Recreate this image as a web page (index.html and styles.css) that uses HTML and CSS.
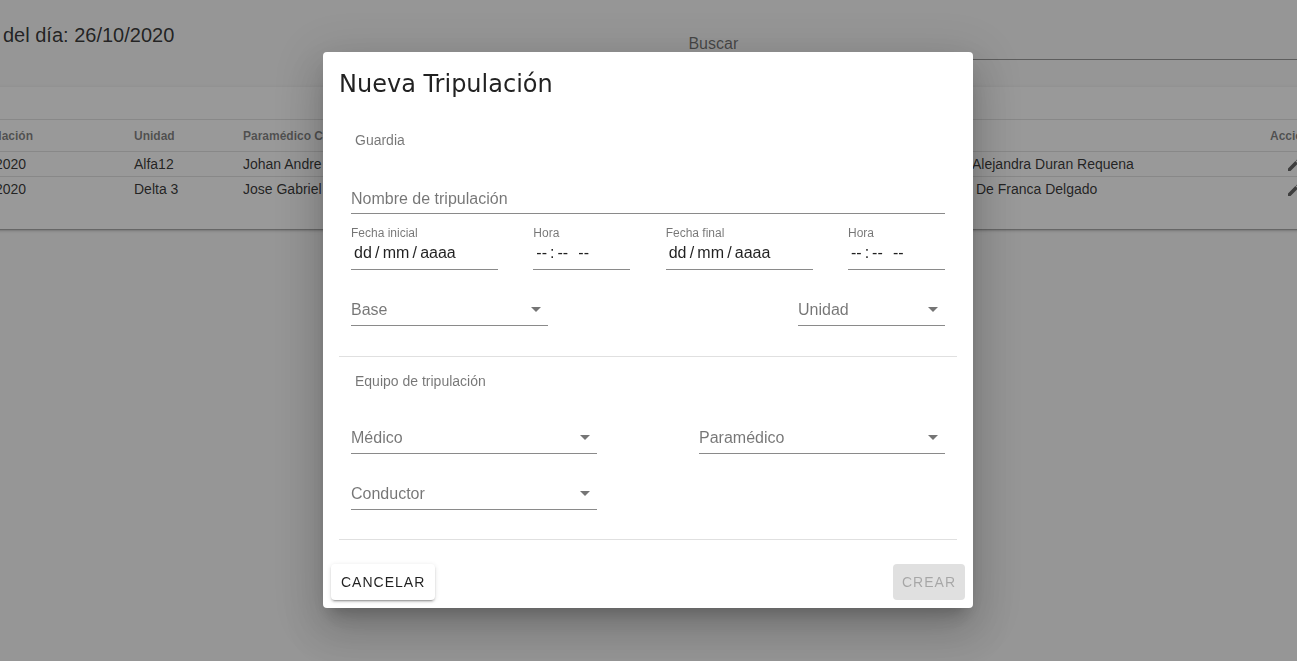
FILE: index.html
```html
<!DOCTYPE html>
<html lang="es">
<head>
<meta charset="utf-8">
<title>Nueva Tripulación</title>
<meta name="viewport" content="width=device-width, initial-scale=1">
<link rel="stylesheet" href="styles.css">
</head>
<body>
<svg class="sprite" aria-hidden="true">
  <symbol id="caret" viewBox="0 0 24 24"><path d="M7,10L12,15L17,10H7Z"/></symbol>
  <symbol id="pencil" viewBox="0 0 24 24"><path d="M20.71,7.04C21.1,6.65 21.1,6 20.71,5.63L18.37,3.29C18,2.9 17.35,2.9 16.96,3.29L15.12,5.12L18.87,8.87M3,17.25V21H6.75L17.81,9.93L14.06,6.18L3,17.25Z"/></symbol>
</svg>

<main class="page">
  <header class="topbar">
    <h1 class="topbar-title">del día: 26/10/2020</h1>
    <input class="search" type="search" placeholder="Buscar" aria-label="Buscar">
  </header>
  <section class="card">
    <table class="crews">
      <colgroup>
        <col class="col-name"><col class="col-unit"><col class="col-medic"><col class="col-driver"><col class="col-actions">
      </colgroup>
      <thead>
        <tr><th>ulación</th><th>Unidad</th><th>Paramédico C</th><th></th><th>Acciones</th></tr>
      </thead>
      <tbody>
        <tr>
          <td>/2020</td><td>Alfa12</td><td>Johan Andre</td><td>Alejandra Duran Requena</td>
          <td><button class="edit" type="button" aria-label="Editar"><svg><use href="#pencil"/></svg></button></td>
        </tr>
        <tr>
          <td>/2020</td><td>Delta 3</td><td>Jose Gabriel</td><td>&nbsp;De Franca Delgado</td>
          <td><button class="edit" type="button" aria-label="Editar"><svg><use href="#pencil"/></svg></button></td>
        </tr>
      </tbody>
    </table>
  </section>
</main>

<div class="overlay">
  <form class="dialog" role="dialog" aria-labelledby="dialog-title">
    <h2 class="dialog-title" id="dialog-title">Nueva Tripulación</h2>

    <section class="group group-shift">
      <h3 class="group-title">Guardia</h3>
      <div class="row">
        <input class="line name" type="text" placeholder="Nombre de tripulación" aria-label="Nombre de tripulación">
      </div>
      <div class="row row-dates">
        <div class="field date">
          <label for="start-date">Fecha inicial</label>
          <input class="line" id="start-date" type="text" value="dd&#8201;/&#8201;mm&#8201;/&#8201;aaaa">
        </div>
        <div class="field time">
          <label for="start-time">Hora</label>
          <input class="line" id="start-time" type="time">
        </div>
        <div class="field date">
          <label for="end-date">Fecha final</label>
          <input class="line" id="end-date" type="text" value="dd&#8201;/&#8201;mm&#8201;/&#8201;aaaa">
        </div>
        <div class="field time">
          <label for="end-time">Hora</label>
          <input class="line" id="end-time" type="time">
        </div>
      </div>
      <div class="row">
        <div class="pick base">
          <select class="line" aria-label="Base"><option>Base</option></select>
          <svg class="caret" aria-hidden="true"><use href="#caret"/></svg>
        </div>
        <div class="pick unit">
          <select class="line" aria-label="Unidad"><option>Unidad</option></select>
          <svg class="caret" aria-hidden="true"><use href="#caret"/></svg>
        </div>
      </div>
    </section>

    <section class="group group-team">
      <h3 class="group-title">Equipo de tripulación</h3>
      <div class="row">
        <div class="pick member">
          <select class="line" aria-label="Médico"><option>Médico</option></select>
          <svg class="caret" aria-hidden="true"><use href="#caret"/></svg>
        </div>
        <div class="pick member">
          <select class="line" aria-label="Paramédico"><option>Paramédico</option></select>
          <svg class="caret" aria-hidden="true"><use href="#caret"/></svg>
        </div>
      </div>
      <div class="row">
        <div class="pick member">
          <select class="line" aria-label="Conductor"><option>Conductor</option></select>
          <svg class="caret" aria-hidden="true"><use href="#caret"/></svg>
        </div>
      </div>
    </section>

    <footer class="actions">
      <button class="btn btn-raised" type="button">CANCELAR</button>
      <button class="btn" type="submit" disabled>CREAR</button>
    </footer>
  </form>
</div>
</body>
</html>
```

FILE: styles.css
```css
* { box-sizing: border-box; }

body {
  margin: 0;
  background: #fafafa;
  color: rgba(0, 0, 0, .87);
  font-family: "Liberation Sans", Arial, sans-serif;
  font-size: 14px;
}

h1, h2, h3 { margin: 0; font-weight: 400; }
input, select, button { font-family: inherit; color: inherit; }
.sprite { display: none; }

/* Page behind the dialog */
.page { min-height: 100vh; overflow: hidden; }

.topbar {
  display: grid;
  grid-template-columns: 53% 1fr;
  align-items: start;
  height: 87px;
}
.topbar-title { padding: 19px 0 0 3px; font-size: 20px; line-height: 32px; }
.search {
  height: 32px;
  margin-top: 28px;
  padding: 0 1px;
  border: 0;
  border-bottom: 1px solid rgba(0, 0, 0, .42);
  border-radius: 0;
  background: transparent;
  font-size: 16px;
  outline: 0;
}
.search::placeholder { color: rgba(0, 0, 0, .6); }

.card {
  margin: 0 -8px;
  padding: 32px 0 27px;
  background: #fff;
  box-shadow: 0 3px 1px -2px rgba(0, 0, 0, .2), 0 2px 2px 0 rgba(0, 0, 0, .14), 0 1px 5px 0 rgba(0, 0, 0, .12);
}
.crews {
  width: calc(100% + 69px);
  margin-left: -17px;
  table-layout: fixed;
  border-collapse: collapse;
}
.col-name { width: 143px; }
.col-unit { width: 109px; }
.col-medic { width: 729px; }
.col-driver { width: 298px; }
.crews th, .crews td { padding: 0 16px; text-align: left; white-space: nowrap; }
.crews th {
  height: 32px;
  border-top: 1px solid rgba(0, 0, 0, .12);
  color: rgba(0, 0, 0, .54);
  font-size: 12px;
}
.crews td { height: 25px; border-top: 1px solid rgba(0, 0, 0, .12); }
.edit { display: block; padding: 2px 0 0 16px; border: 0; background: none; }
.edit svg { display: block; width: 16px; height: 16px; fill: rgba(0, 0, 0, .66); }

/* Dialog */
.overlay {
  position: fixed;
  inset: 0;
  display: flex;
  align-items: center;
  justify-content: center;
  padding: 0 1px 1px 0;
  background: rgba(33, 33, 33, .46);
}
.dialog {
  width: 650px;
  max-width: 90%;
  border-radius: 4px;
  background: #fff;
  box-shadow: 0 11px 15px -7px rgba(0, 0, 0, .2), 0 24px 38px 3px rgba(0, 0, 0, .14), 0 9px 46px 8px rgba(0, 0, 0, .12);
}
.dialog-title {
  padding: 16px 16px 0;
  font-family: "DejaVu Sans", sans-serif;
  font-size: 24px;
  line-height: 32px;
}
.group {
  margin: 0 16px;
  padding: 0 12px 30px;
  border-bottom: 1px solid rgba(0, 0, 0, .12);
}
.group-shift { padding-top: 16px; }
.group-team { padding-bottom: 29px; }
.group-title {
  padding-left: 4px;
  color: rgba(0, 0, 0, .54);
  font-size: 14px;
  line-height: 48px;
}
.row { display: flex; justify-content: space-between; margin-top: 24px; }
.group-title + .row { margin-top: 17px; }
.group-shift .group-title + .row { margin-top: 18px; }
.group-shift .row-dates { margin-top: 11px; }

.line {
  display: block;
  width: 100%;
  height: 32px;
  padding: 0;
  border: 0;
  border-bottom: 1px solid rgba(0, 0, 0, .46);
  border-radius: 0;
  background: transparent;
  font-size: 16px;
  outline: 0;
  appearance: none;
}
.name { padding-top: 2px; }
.line::placeholder { color: rgba(0, 0, 0, .54); }

.field label {
  display: block;
  color: rgba(0, 0, 0, .54);
  font-size: 12px;
  line-height: 16px;
}
.field .line { height: 29px; padding: 0 0 4px 3px; }
.field input[type="time"] { padding-left: 2px; }
.line::-webkit-calendar-picker-indicator { display: none; }
.line::-webkit-datetime-edit-hour-field { padding: 0 3px 0 1px; }
.line::-webkit-datetime-edit-minute-field { padding: 0 3px; }
.line::-webkit-datetime-edit-ampm-field { padding: 0 1px 0 4px; }
.date { width: 147px; }
.time { width: 97px; }

.pick { position: relative; }
.pick .line { color: rgba(0, 0, 0, .54); }
.caret {
  position: absolute;
  top: 3px;
  right: 0;
  width: 24px;
  height: 24px;
  fill: rgba(0, 0, 0, .54);
  pointer-events: none;
}
.base { width: 197px; }
.unit { width: 147px; }
.member { width: 246px; }

.actions { display: flex; justify-content: space-between; padding: 24px 8px 8px; }
.btn {
  height: 36px;
  padding: 0 9px;
  border: 0;
  border-radius: 4px;
  background: #fff;
  font-size: 14px;
  letter-spacing: 1px;
}
.btn-raised {
  padding: 0 10px;
  box-shadow: 0 3px 1px -2px rgba(0, 0, 0, .2), 0 2px 2px 0 rgba(0, 0, 0, .14), 0 1px 5px 0 rgba(0, 0, 0, .12);
}
.btn:disabled { background: #e0e0e0; color: rgba(0, 0, 0, .26); }
```
